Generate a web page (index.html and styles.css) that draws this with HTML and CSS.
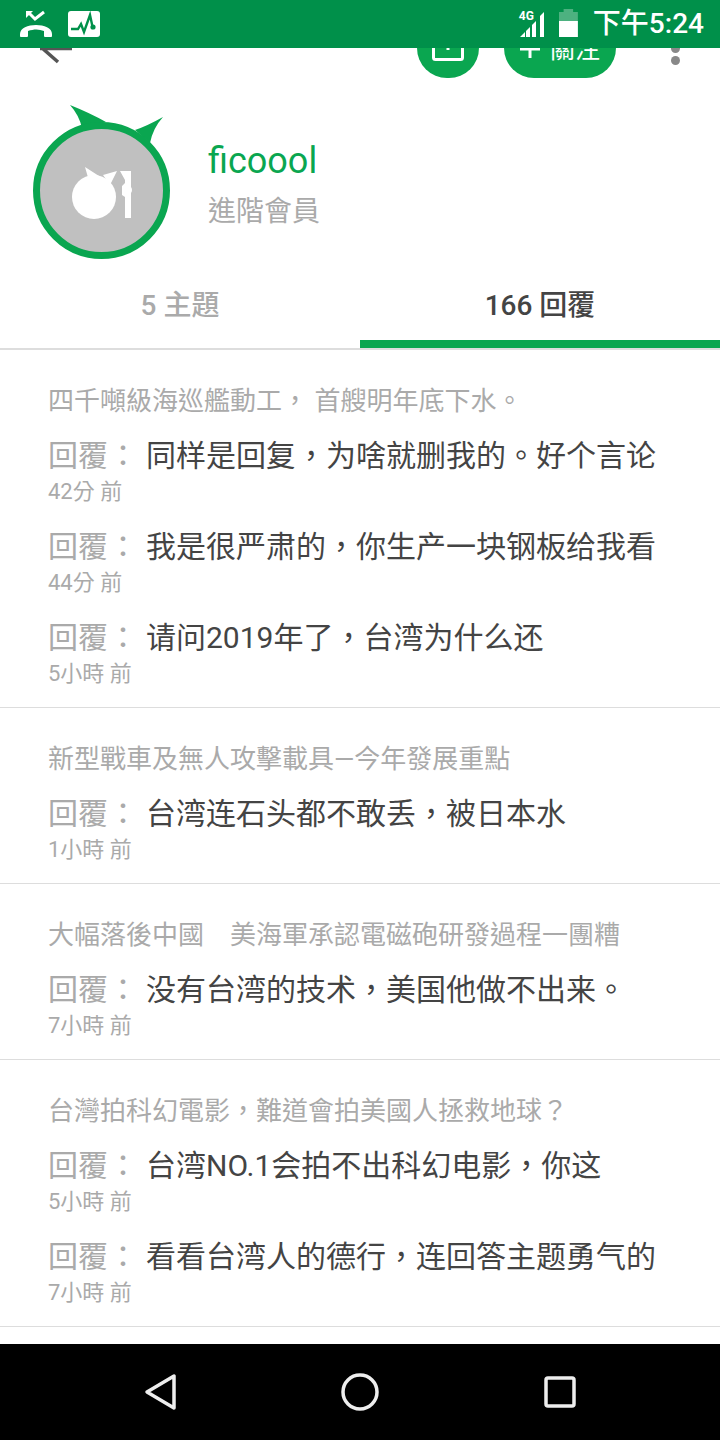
FILE: index.html
```html
<!DOCTYPE html>
<html lang="zh-Hant">
<head>
    <meta charset="UTF-8">
    <meta name="viewport" content="width=device-width, initial-scale=1.0">
    <title>ficoool</title>
    <link rel="stylesheet" href="styles.css">
</head>
<body>
<div class="screen">

    <div class="status-bar">
        <div class="status-left">
            <svg width="34" height="28" viewBox="0 0 34 28"><path d="M10 3l6 6 9-7" fill="none" stroke="#fff" stroke-width="3"/><path d="M7 1h7l-7 7z" fill="#fff"/><path d="M1 24c0-12 32-12 32 0v2c0 1-1 1-1 1h-6c-1 0-1-1-1-1v-5c-5-2-10-2-16 0v5s0 1-1 1H2s-1 0-1-1z" fill="#fff"/></svg>
            <svg width="32" height="26" viewBox="0 0 32 26"><rect width="32" height="26" rx="3" fill="#fff"/><path d="M3 18h7l3-5 3 8 6-17 3 14" fill="none" stroke="#00904a" stroke-width="2.4"/><circle cx="25" cy="16" r="2.6" fill="#00904a"/></svg>
        </div>
        <div class="status-right">
            <div class="signal">
                <span class="net">4G</span>
                <svg width="26" height="26" viewBox="0 0 26 26"><path d="M1 26l5-5v5zM7 26v-6l4-4v10zM13 26V14l4-4v16zM21 26V5l4-4v25z" fill="#fff"/></svg>
            </div>
            <div class="battery"><div class="battery-level"></div></div>
            <span class="clock">下午5:24</span>
        </div>
    </div>

    <div class="toolbar">
        <svg class="back" width="36" height="20" viewBox="0 0 36 20"><path d="M0 .5h32M2 0l16 14" fill="none" stroke="#555" stroke-width="3.5"/></svg>
        <div class="toolbar-actions">
            <div class="round-btn">
                <svg width="34" height="14" viewBox="0 0 34 14"><rect x="2.5" y="-10" width="29" height="21.5" rx="2" fill="none" stroke="#fff" stroke-width="3"/><path d="M17 0v2" stroke="#fff" stroke-width="3"/></svg>
            </div>
            <div class="follow-btn">
                <svg width="20" height="10" viewBox="0 0 20 10"><path d="M0 1h20M10 0v10" stroke="#fff" stroke-width="3"/></svg>
                <span class="follow-label">關注</span>
            </div>
            <div class="more"><i></i><i></i></div>
        </div>
    </div>

    <div class="profile">
        <svg class="avatar" width="140" height="162" viewBox="33 100 140 162">
            <path d="M70 105q20 8 36 17l-24 6q-3-13-12-23zM163 117q-16 9-28 13l15 13q3-15 13-26z" fill="#0aa650"/>
            <circle cx="101.5" cy="190.5" r="65" fill="#c0c0c0" stroke="#0aa650" stroke-width="7"/>
            <circle cx="94" cy="197" r="22" fill="#fff"/>
            <path d="M85 167l14 9-10 5zM117 171l-14 4 7 10z" fill="#fff"/>
            <path d="M120 171h11v47h-6v-21l-3-2v-9l3-3v-3z" fill="#fff"/>
            <circle cx="127" cy="190" r="5" fill="#fff"/>
        </svg>
        <div class="profile-text">
            <div class="name">ficoool</div>
            <div class="rank">進階會員</div>
        </div>
    </div>

    <div class="tabs">
        <div class="tab">5 主題</div>
        <div class="tab active">166 回覆</div>
    </div>

    <div class="post">
        <div class="post-title">四千噸級海巡艦動工， 首艘明年底下水。</div>
        <div class="reply">
            <div class="reply-line"><span class="reply-label">回覆：</span>同样是回复，为啥就删我的。好个言论</div>
            <div class="reply-time">42分 前</div>
        </div>
        <div class="reply">
            <div class="reply-line"><span class="reply-label">回覆：</span>我是很严肃的，你生产一块钢板给我看</div>
            <div class="reply-time">44分 前</div>
        </div>
        <div class="reply">
            <div class="reply-line"><span class="reply-label">回覆：</span>请问2019年了，台湾为什么还</div>
            <div class="reply-time">5小時 前</div>
        </div>
    </div>

    <div class="post">
        <div class="post-title">新型戰車及無人攻擊載具—今年發展重點</div>
        <div class="reply">
            <div class="reply-line"><span class="reply-label">回覆：</span>台湾连石头都不敢丢，被日本水</div>
            <div class="reply-time">1小時 前</div>
        </div>
    </div>

    <div class="post">
        <div class="post-title">大幅落後中國　美海軍承認電磁砲研發過程一團糟</div>
        <div class="reply">
            <div class="reply-line"><span class="reply-label">回覆：</span>没有台湾的技术，美国他做不出来。</div>
            <div class="reply-time">7小時 前</div>
        </div>
    </div>

    <div class="post">
        <div class="post-title">台灣拍科幻電影，難道會拍美國人拯救地球？</div>
        <div class="reply">
            <div class="reply-line"><span class="reply-label">回覆：</span>台湾NO.1会拍不出科幻电影，你这</div>
            <div class="reply-time">5小時 前</div>
        </div>
        <div class="reply">
            <div class="reply-line"><span class="reply-label">回覆：</span>看看台湾人的德行，连回答主题勇气的</div>
            <div class="reply-time">7小時 前</div>
        </div>
    </div>

    <div class="nav-bar">
        <svg width="40" height="40" viewBox="0 0 40 40"><path d="M34 4v32L7 20z" fill="none" stroke="#eee" stroke-width="3.5" stroke-linejoin="round"/></svg>
        <svg width="40" height="40" viewBox="0 0 40 40"><circle cx="20" cy="20" r="17" fill="none" stroke="#eee" stroke-width="3.5"/></svg>
        <svg width="40" height="40" viewBox="0 0 40 40"><rect x="6" y="6" width="28" height="28" rx="2" fill="none" stroke="#eee" stroke-width="3.5"/></svg>
    </div>

</div>
</body>
</html>
```

FILE: styles.css
```css
body {
    margin: 0;
    font-family: Roboto, "Noto Sans CJK TC", sans-serif;
    background: #fff;
}
.screen {
    position: relative;
    width: 720px;
    height: 1440px;
    display: flex;
    flex-direction: column;
    overflow: hidden;
}
.status-bar {
    height: 48px;
    flex: none;
    background: #00904a;
    display: flex;
    justify-content: space-between;
    align-items: center;
    color: #fff;
}
.status-left {
    display: flex;
    align-items: center;
    gap: 15px;
    padding-left: 19px;
}
.status-right {
    display: flex;
    align-items: center;
    padding-right: 16px;
}
.signal {
    position: relative;
    width: 26px;
    height: 26px;
    margin-right: 14px;
}
.net {
    position: absolute;
    left: 0;
    top: -1px;
    font-size: 12px;
    line-height: 12px;
    font-weight: 700;
}
.battery {
    position: relative;
    width: 19px;
    height: 28px;
    margin: -2px 15px 0 0;
    background: rgba(255, 255, 255, 0.3);
    clip-path: polygon(25% 0, 75% 0, 75% 3px, 100% 3px, 100% 100%, 0 100%, 0 3px, 25% 3px);
}
.battery-level {
    position: absolute;
    left: 0;
    right: 0;
    bottom: 0;
    height: 16px;
    background: #fff;
}
.clock {
    font-size: 28px;
    line-height: 34px;
    font-weight: 500;
}
.toolbar {
    height: 30px;
    flex: none;
    display: flex;
    justify-content: space-between;
    padding: 0 39px 0 40px;
    overflow: hidden;
}
.toolbar-actions {
    display: flex;
    align-items: flex-end;
}
.round-btn {
    width: 62px;
    height: 30px;
    background: #0aa650;
    border-radius: 0 0 31px 31px;
    display: flex;
    justify-content: center;
}
.follow-btn {
    width: 112px;
    height: 30px;
    margin-left: 25px;
    background: #0aa650;
    border-radius: 0 0 30px 30px;
    display: flex;
    justify-content: center;
    align-items: flex-start;
    gap: 10px;
    overflow: hidden;
    color: #fff;
}
.follow-label {
    margin-top: -12px;
    font-size: 25px;
    line-height: 28px;
}
.more {
    width: 10px;
    margin-left: 55px;
    padding-bottom: 13px;
    display: flex;
    flex-direction: column;
    gap: 3px;
}
.more i {
    width: 9px;
    height: 9px;
    border-radius: 50%;
    background: #888;
}
.profile {
    height: 192px;
    flex: none;
    display: flex;
    padding-left: 33px;
}
.avatar {
    margin-top: 22px;
}
.profile-text {
    margin-left: 35px;
    padding-top: 60px;
}
.name {
    font-size: 36px;
    line-height: 46px;
    color: #0aa650;
}
.rank {
    font-size: 28px;
    line-height: 50px;
    padding-top: 3px;
    color: #aaa;
}
.tabs {
    height: 78px;
    flex: none;
    display: flex;
    border-bottom: 2px solid #ddd;
}
.tab {
    flex: 1;
    padding-top: 18px;
    box-sizing: border-box;
    text-align: center;
    font-size: 28px;
    line-height: 36px;
    font-weight: 500;
    color: #aaa;
    border-bottom: 8px solid transparent;
}
.tab.active {
    color: #444;
    border-bottom-color: #0aa650;
}
.post {
    padding: 33px 0 15px 48px;
    border-bottom: 1px solid #ddd;
}
.post-title {
    font-size: 26px;
    line-height: 36px;
    color: #aaa;
    white-space: pre;
}
.reply {
    padding-top: 19px;
}
.reply-line {
    font-size: 30px;
    line-height: 36px;
    color: #444;
    white-space: nowrap;
}
.reply-label {
    color: #aaa;
    margin-right: 8px;
}
.reply-time {
    font-size: 22px;
    line-height: 36px;
    color: #aaa;
}
.nav-bar {
    position: absolute;
    left: 0;
    top: 1344px;
    width: 720px;
    height: 96px;
    background: #000;
    display: flex;
    justify-content: center;
    align-items: center;
    gap: 160px;
}
```
